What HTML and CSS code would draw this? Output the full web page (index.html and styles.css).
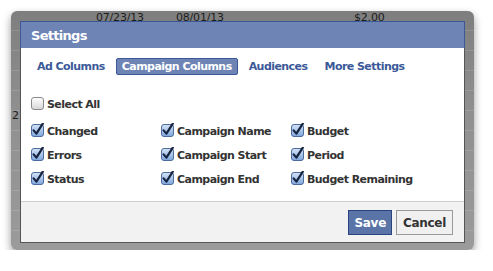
FILE: index.html
```html
<!DOCTYPE html>
<html lang="en">
  <head>
    <meta charset="UTF-8" />
    <meta name="viewport" content="width=device-width, initial-scale=1.0" />
    <title>Settings</title>
    <link rel="stylesheet" href="styles.css">
  </head>
  <body>
    <svg width="0" height="0" class="defs">
      <defs>
        <linearGradient id="box-off" x1="0" y1="0" x2="0" y2="1">
          <stop offset="0" stop-color="#ffffff" />
          <stop offset="1" stop-color="#d6d6d6" />
        </linearGradient>
        <linearGradient id="box-on" x1="0" y1="0" x2="0" y2="1">
          <stop offset="0" stop-color="#d4e4f7" />
          <stop offset="1" stop-color="#7fa6dc" />
        </linearGradient>
        <symbol id="cb-off" viewBox="0 0 14 14">
          <rect x="0.5" y="1.5" width="12" height="12" rx="2.5" fill="url(#box-off)" stroke="#8a8a8a" />
        </symbol>
        <symbol id="cb-on" viewBox="0 0 14 14">
          <rect x="0.5" y="1.5" width="12" height="12" rx="2.5" fill="url(#box-on)" stroke="#4d6a9c" />
          <path d="M2.6 7.4 L5.4 10.6 L11.8 0.6" fill="none" stroke="#16233f" stroke-width="2.2" stroke-linecap="round" stroke-linejoin="round" />
        </symbol>
      </defs>
    </svg>

    <div class="frame">
      <!-- table behind the dialog -->
      <div class="backdrop">
        <span class="cell date-start">07/23/13</span>
        <span class="cell date-end">08/01/13</span>
        <span class="cell budget">$2.00</span>
        <span class="cell row-num">2</span>
      </div>

      <div class="dialog">
        <div class="dialog-title">Settings</div>

        <div class="dialog-body">
          <nav class="tabs">
            <a class="tab">Ad Columns</a>
            <a class="tab active">Campaign Columns</a>
            <a class="tab">Audiences</a>
            <a class="tab">More Settings</a>
          </nav>

          <label class="check select-all">
            <svg class="box"><use href="#cb-off" /></svg>Select All
          </label>

          <div class="columns">
            <label class="check"><svg class="box"><use href="#cb-on" /></svg>Changed</label>
            <label class="check"><svg class="box"><use href="#cb-on" /></svg>Errors</label>
            <label class="check"><svg class="box"><use href="#cb-on" /></svg>Status</label>
            <label class="check"><svg class="box"><use href="#cb-on" /></svg>Campaign Name</label>
            <label class="check"><svg class="box"><use href="#cb-on" /></svg>Campaign Start</label>
            <label class="check"><svg class="box"><use href="#cb-on" /></svg>Campaign End</label>
            <label class="check"><svg class="box"><use href="#cb-on" /></svg>Budget</label>
            <label class="check"><svg class="box"><use href="#cb-on" /></svg>Period</label>
            <label class="check"><svg class="box"><use href="#cb-on" /></svg>Budget Remaining</label>
          </div>
        </div>

        <div class="dialog-footer">
          <button class="btn btn-primary">Save</button>
          <button class="btn">Cancel</button>
        </div>
      </div>
    </div>
  </body>
</html>
```

FILE: styles.css
```css
body {
  margin: 0;
  padding: 11px 0 0 11px;
  background: #ffffff;
  font-family: "DejaVu Sans", "Liberation Sans", sans-serif;
}

.defs {
  position: absolute;
}

.frame {
  position: relative;
  box-sizing: border-box;
  width: 463px;
  height: 239px;
  padding: 10px 9px 9px 9px;
  border-radius: 6px;
  background:
    repeating-linear-gradient(180deg, transparent 0, transparent 19px, rgba(255, 255, 255, 0.12) 19px, rgba(255, 255, 255, 0.12) 20px),
    linear-gradient(180deg, #7e7e7e 0%, #8f8f8f 40%, #9b9b9b 100%);
  box-shadow: 0 4px 9px rgba(0, 0, 0, 0.4);
}

.backdrop .cell {
  position: absolute;
  font-size: 11px;
  line-height: 11px;
  color: #1c1c1c;
  letter-spacing: -0.2px;
}

.date-start {
  top: 1px;
  left: 85px;
}

.date-end {
  top: 1px;
  left: 165px;
}

.budget {
  top: 1px;
  left: 343px;
}

.row-num {
  top: 99px;
  left: 1px;
}

.dialog {
  position: relative;
  display: flex;
  flex-direction: column;
  height: 220px;
  border: 1px solid #555555;
  background: #ffffff;
}

.dialog-title {
  height: 26px;
  margin: -1px -1px 0 -1px;
  padding-left: 10px;
  border: 1px solid #3b5998;
  border-bottom: none;
  background: #6d84b4;
  color: #ffffff;
  font-size: 13px;
  font-weight: bold;
  line-height: 27px;
  letter-spacing: -0.7px;
}

.dialog-body {
  flex: 1;
  padding: 10px 10px 0 10px;
}

.tabs {
  display: flex;
  gap: 5px;
}

.tab {
  padding: 0 5px;
  border: 1px solid transparent;
  border-radius: 2px;
  color: #3b5998;
  font-size: 11px;
  font-weight: bold;
  line-height: 15px;
  letter-spacing: -0.55px;
}

.tab.active {
  background: #6d84b4;
  border-color: #3b5998;
  color: #ffffff;
}

.check {
  display: flex;
  align-items: center;
  height: 24px;
  color: #333333;
  font-size: 11px;
  font-weight: bold;
  letter-spacing: -0.55px;
  white-space: nowrap;
}

.check .box {
  width: 14px;
  height: 14px;
  margin-right: 2px;
  margin-top: -2px;
}

.select-all {
  margin-top: 17px;
  margin-bottom: 3px;
}

.columns {
  display: grid;
  grid-template-columns: 130px 130px 130px;
  grid-template-rows: repeat(3, 24px);
  grid-auto-flow: column;
}

.dialog-footer {
  display: flex;
  justify-content: flex-end;
  gap: 4px;
  height: 41px;
  box-sizing: border-box;
  padding: 8px 11px 0 0;
  border-top: 1px solid #cccccc;
  background: #f2f2f2;
}

.btn {
  height: 25px;
  padding: 0 6px;
  border: 1px solid #999999;
  background: #f0f0f0;
  color: #333333;
  font-family: inherit;
  font-size: 12px;
  font-weight: bold;
  letter-spacing: -0.3px;
}

.btn-primary {
  padding: 0 5px;
  background: #5b74a8;
  border-color: #29447e;
  color: #ffffff;
}
```
